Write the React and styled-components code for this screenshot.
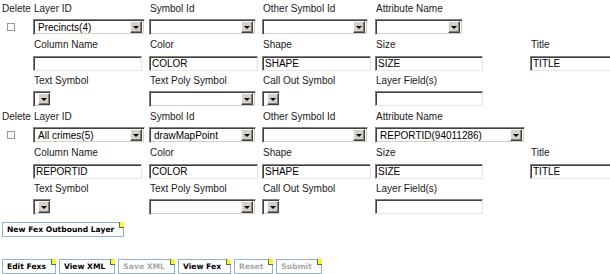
import React from 'react';
import styled, { createGlobalStyle } from 'styled-components';

const GlobalStyle = createGlobalStyle`
  html, body {
    margin: 0;
    padding: 0;
    background: #fff;
    overflow: hidden;
  }
  body {
    font-family: "Liberation Sans", Arial, sans-serif;
    font-size: 10px;
    color: #1a1a1a;
  }
`;

const Page = styled.div`
  padding: 0 0 0 2px;
  overflow: hidden;
`;

const Block = styled.div`
  display: grid;
  grid-template-columns: 31px 116px 113px 113px 155px minmax(0, 1fr);
  grid-template-rows: 17px 20px 16px 20px 16px 19px;
  align-items: center;
`;

const Label = styled.div`
  padding-left: ${p => (p.$flush ? 0 : 1)}px;
  line-height: 12px;
  white-space: nowrap;
`;

const Cell = styled.div`
  display: flex;
  align-items: center;
  grid-column: ${p => p.$col};
`;

const Check = styled.input.attrs({ type: 'checkbox' })`
  appearance: none;
  margin: 0 0 0 5px;
  width: 8px;
  height: 8px;
  border: 1px solid #9a9a9a;
  background: #fbfbfb;
  box-sizing: border-box;
`;

const SelectBox = styled.div`
  display: flex;
  align-items: center;
  width: ${p => p.$w}px;
  height: 16px;
  box-sizing: border-box;
  border: 1px solid;
  border-color: #808080 #fff #fff #808080;
  box-shadow: inset 1px 1px 0 #404040, inset -1px -1px 0 #d4d0c8;
  background: #fff;
  padding: 1px 2px 1px 1px;
`;

const SelectValue = styled.span`
  flex: 1;
  overflow: hidden;
  white-space: nowrap;
  padding-left: 3px;
  font-size: 10px;
  color: #000;
`;

const ArrowBox = styled.span`
  display: flex;
  align-items: center;
  justify-content: center;
  width: 12px;
  height: 12px;
  box-sizing: border-box;
  background: #d4d0c8;
  border: 1px solid;
  border-color: #fff #404040 #404040 #fff;
  box-shadow: inset -1px -1px 0 #808080;
  flex: none;

  &::after {
    content: '';
    border-left: 3px solid transparent;
    border-right: 3px solid transparent;
    border-top: 3px solid #000;
    margin: 1px 1px 0 0;
  }
`;

const TextInput = styled.input.attrs({ type: 'text', readOnly: true })`
  width: ${p => p.$w}px;
  flex: none;
  height: 15px;
  box-sizing: border-box;
  margin: 0;
  padding: 1px 2px 0;
  border: 1px solid;
  border-color: #808080 #e8e4dc #e8e4dc #808080;
  box-shadow: inset 1px 1px 0 #404040;
  font-family: "Liberation Sans", Arial, sans-serif;
  font-size: 10px;
  color: #000;
  background: #fff;
  outline: none;
`;

const ButtonRow = styled.div`
  display: flex;
  gap: 3px;
  margin-top: ${p => p.$top}px;
`;

const ActionButton = styled.button`
  position: relative;
  height: 15px;
  margin: 0;
  padding: 0 9px 0 4px;
  border: 1px solid #8fb0d8;
  background: #fff;
  font-family: "DejaVu Sans", Verdana, sans-serif;
  font-weight: bold;
  font-size: 7.6px;
  line-height: 13px;
  color: ${p => (p.disabled ? '#a8a8a8' : '#000')};
  white-space: nowrap;

  &::after {
    content: '';
    position: absolute;
    top: -1px;
    right: -1px;
    width: 4px;
    height: 5px;
    background: #ffff00;
    border-left: 1px solid #3c6aa8;
    border-bottom: 1px solid #3c6aa8;
  }
`;

const Dropdown = ({ w, value }) => (
  <SelectBox $w={w}>
    <SelectValue>{value}</SelectValue>
    <ArrowBox />
  </SelectBox>
);

const layers = [
  {
    layer: 'Precincts(4)',
    symbol: '',
    attr: '',
    attrW: 88,
    column: '',
  },
  {
    layer: 'All crimes(5)',
    symbol: 'drawMapPoint',
    attr: 'REPORTID(94011286)',
    attrW: 150,
    column: 'REPORTID',
  },
];

const LayerBlock = ({ data }) => (
  <Block>
    <Label $flush>Delete</Label>
    <Label>Layer ID</Label>
    <Label>Symbol Id</Label>
    <Label>Other Symbol Id</Label>
    <Label>Attribute Name</Label>
    <div />

    <Cell $col={1}><Check /></Cell>
    <Cell $col={2}><Dropdown w={112} value={data.layer} /></Cell>
    <Cell $col={3}><Dropdown w={107} value={data.symbol} /></Cell>
    <Cell $col={4}><Dropdown w={106} value="" /></Cell>
    <Cell $col={5}><Dropdown w={data.attrW} value={data.attr} /></Cell>
    <div />

    <div />
    <Label>Column Name</Label>
    <Label>Color</Label>
    <Label>Shape</Label>
    <Label>Size</Label>
    <Label>Title</Label>

    <div />
    <Cell $col={2}><TextInput $w={109} value={data.column} /></Cell>
    <Cell $col={3}><TextInput $w={109} value="COLOR" /></Cell>
    <Cell $col={4}><TextInput $w={109} value="SHAPE" /></Cell>
    <Cell $col={5}><TextInput $w={108} value="SIZE" /></Cell>
    <Cell $col={6}><TextInput $w={108} value="TITLE" /></Cell>

    <div />
    <Label>Text Symbol</Label>
    <Label>Text Poly Symbol</Label>
    <Label>Call Out Symbol</Label>
    <Label>Layer Field(s)</Label>
    <div />

    <div />
    <Cell $col={2}><Dropdown w={18} value="" /></Cell>
    <Cell $col={3}><Dropdown w={107} value="" /></Cell>
    <Cell $col={4}><Dropdown w={18} value="" /></Cell>
    <Cell $col={5}><TextInput $w={108} value="" /></Cell>
    <div />
  </Block>
);

export default function App() {
  return (
    <Page>
      <GlobalStyle />
      {layers.map(l => (
        <LayerBlock key={l.layer} data={l} />
      ))}
      <ButtonRow $top={6}>
        <ActionButton>New Fex Outbound Layer</ActionButton>
      </ButtonRow>
      <ButtonRow $top={22}>
        <ActionButton>Edit Fexs</ActionButton>
        <ActionButton>View XML</ActionButton>
        <ActionButton disabled>Save XML</ActionButton>
        <ActionButton>View Fex</ActionButton>
        <ActionButton disabled>Reset</ActionButton>
        <ActionButton disabled>Submit</ActionButton>
      </ButtonRow>
    </Page>
  );
}
